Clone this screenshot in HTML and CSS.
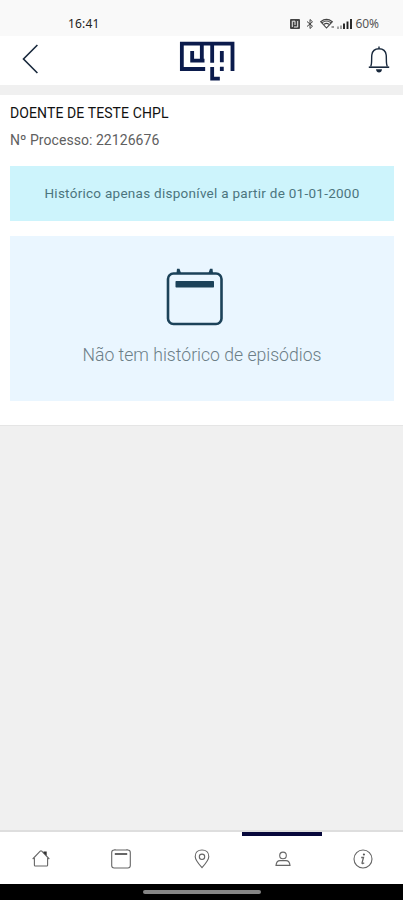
FILE: index.html
```
<!DOCTYPE html>
<html lang="pt">
<head>
<meta charset="utf-8">
<meta name="viewport" content="width=device-width, initial-scale=1">
<title>Histórico de episódios</title>
<link rel="stylesheet" href="styles.css">
</head>
<body>
<div class="screen">
  <div class="status">
    <span class="time">16:41</span>
    <div class="indicators">
      <svg class="nfc" width="10" height="10" viewBox="0 0 10 10"><rect width="10" height="10" rx="1" fill="#444"/><path d="M2.3 8V2.2H5V6M4 8H7.7V2" fill="none" stroke="#eee" stroke-width="1"/></svg>
      <svg class="bt" width="8" height="12" viewBox="0 0 8 12"><path d="M1 3.5L6.5 8.2L4 10.5V1.5L6.5 3.8L1 8.5" fill="none" stroke="#444" stroke-width="1"/></svg>
      <svg class="wifi" width="15" height="12" viewBox="0 0 15 12"><path d="M.7 3.7Q6.5-1 12.3 3.7L6.5 10ZM2.3 4.6Q6.5 1.5 10.7 4.6M4 6.3Q6.5 4.5 9 6.3" fill="none" stroke="#444" stroke-width="1.1"/><path d="M11.5 9H14" stroke="#777" stroke-width="1.5"/></svg>
      <svg class="signal" width="15" height="11" viewBox="0 0 15 11"><path d="M1 11V8.5M4 11V7.5" stroke="#888" stroke-width="1.5"/><path d="M7 11V5.5M10.5 11V3.5M14 11V1" stroke="#222" stroke-width="1.9"/></svg>
      <span class="battery">60%</span>
    </div>
  </div>
  <header class="header">
    <svg width="17" height="30" viewBox="0 0 17 30"><path d="M15.4 1L1.5 15L15.4 29" fill="none" stroke="#18283c" stroke-width="1.6"/></svg>
    <svg class="logo" width="56" height="40" viewBox="28 20 168 120"><path d="M105 104H35V28H187V110M66 50V79H95V28M95 79H103M126 28V85M126 98V133H149M155 50V84M155 97V110" fill="none" stroke="#0b1b4c" stroke-width="11.5"/></svg>
    <svg width="22" height="28" viewBox="0 0 22 28"><path d="M11 .5V2.3M2.7 20.5C4.1 18 3.4 13 3.8 9C4.3 4.8 7 2.7 11 2.7S17.7 4.8 18.2 9C18.6 13 17.9 18 19.3 20.5" fill="none" stroke="#18283c" stroke-width="1.4"/><path d="M.8 21.2H21.2" stroke="#18283c" stroke-width="1.6"/><path d="M8 23.2H14Q13.5 26.5 11 26.5T8 23.2Z" fill="#18283c"/></svg>
  </header>
  <main class="content">
    <h1 class="patient">DOENTE DE TESTE CHPL</h1>
    <p class="process">Nº Processo: 22126676</p>
    <div class="notice"><span>Histórico apenas disponível a partir de 01-01-2000</span></div>
    <section class="empty">
      <svg width="58" height="60" viewBox="0 0 58 60"><rect x="2" y="5.5" width="53.5" height="50.5" rx="5.5" fill="none" stroke="#1c4259" stroke-width="2.6"/><path d="M10.5 5L11 .8H13.5L15 5ZM42.5 5L44 .8H46.5L47 5Z" fill="#1c4259"/><rect x="9.5" y="13" width="38.5" height="6.5" rx=".7" fill="#1c4259"/></svg>
      <p class="message">Não tem histórico de episódios</p>
    </section>
  </main>
  <nav class="nav">
    <div class="tab"><svg width="20" height="20" viewBox="0 0 20 20"><path d="M1.7 10L9.2 2.2Q10 1.5 10.8 2.2L18.3 10M3.4 9V16.2Q3.4 17 4.2 17H15.8Q16.6 17 16.6 16.2V9" /><path d="M12.5 2.5H15.7V6.8L12.5 4Z" fill="#333" stroke="none"/></svg></div>
    <div class="tab"><svg width="20" height="20" viewBox="0 0 20 20"><rect x=".7" y="1" width="18.6" height="18" rx="2.5"/><path d="M4 .3V1M16 .3V1"/><path d="M3.8 5H16.2" stroke-width="2"/></svg></div>
    <div class="tab"><svg width="20" height="20" viewBox="0 0 20 20"><path d="M10 18.6Q3.2 11 3.2 7.4C3.2 3.5 6 1 10 1S16.8 3.5 16.8 7.4Q16.8 11 10 18.6Z"/><circle cx="10" cy="7.8" r="2.7"/></svg></div>
    <div class="tab active"><svg width="20" height="20" viewBox="0 0 20 20"><circle cx="10" cy="6.4" r="3.3"/><path d="M3 16.4Q3.5 11.6 7 11.6H13Q16.5 11.6 17 16.4Z"/></svg></div>
    <div class="tab"><svg width="20" height="20" viewBox="0 0 20 20"><circle cx="10" cy="10" r="9"/><path d="M8.2 8.5H10.5L9 14.2Q9.5 15 11.2 13.8" stroke-width="1.3"/><circle cx="10.9" cy="5.5" r="1.1" fill="#555" stroke="none"/></svg></div>
  </nav>
  <div class="system"><div class="handle"></div></div>
</div>
</body>
</html>
```
FILE: styles.css
```
* { box-sizing: border-box; }
body { margin: 0; font-family: Roboto, "Liberation Sans", sans-serif; }
h1, p { margin: 0; font-weight: 400; }
svg { display: block; flex: none; }
.screen { width: 403px; height: 900px; display: flex; flex-direction: column; background: #f0f0f0; overflow: hidden; }
.status { height: 36px; flex: none; background: #f9f9f9; display: flex; justify-content: space-between; align-items: flex-start; padding: 16px 24px 0 68px; color: #222; }
.time { font: 400 12px/16px "Noto Sans", sans-serif; letter-spacing: .15px; }
.indicators { display: flex; align-items: center; height: 16px; }
.bt { margin-left: 6px; }
.wifi { margin-left: 6px; }
.signal { margin-left: 2px; margin-top: -1px; }
.battery { margin-left: 4px; font: 12px/16px "Noto Sans", sans-serif; letter-spacing: -.1px; color: #555; }
.header { height: 49px; flex: none; background: #fff; display: grid; grid-template-columns: 1fr auto 1fr; padding: 0 13px 0 22px; align-items: start; }
.header > :first-child { margin-top: 8px; }
.header > :last-child { margin-top: 10px; justify-self: end; }
.logo { margin-top: 5px; margin-left: 5px; transform: translateX(-1.5px); }
.content { height: 331px; flex: none; margin-top: 10px; padding: 9px 9px 0 10px; background: #fff; border-bottom: 1px solid #e5e5e5; }
.patient { font-size: 14px; line-height: 18px; letter-spacing: .1px; color: #111; white-space: nowrap; }
.process { margin-top: 9px; font-size: 14px; line-height: 18px; letter-spacing: .05px; color: #606060; white-space: nowrap; }
.notice { height: 55px; margin-top: 17px; padding-bottom: 2px; background: #cdf4fc; display: flex; align-items: center; justify-content: center; font-size: 13.5px; letter-spacing: .27px; color: #4c757e; white-space: nowrap; }
.empty { height: 165px; margin-top: 15px; background: #eaf6ff; display: flex; flex-direction: column; align-items: center; padding: 32px 14px 0 0; }
.message { margin-top: 15px; margin-left: 14px; font-size: 17.6px; line-height: 24px; font-weight: 300; color: #6c7e87; white-space: nowrap; }
.nav { height: 54px; flex: none; margin-top: auto; display: grid; grid-template-columns: repeat(5, 1fr); background: #fff; border-top: 2px solid #dedede; padding-bottom: 2px; }
.tab { display: flex; align-items: center; justify-content: center; padding: 3px 0 0 1px; }
.tab svg { fill: none; stroke: #666; stroke-width: 1.1; }
.active { box-shadow: inset 0 4px #07083b; }
.system { height: 16px; flex: none; background: #000; display: flex; justify-content: center; padding-top: 6px; }
.handle { width: 118px; height: 4px; border-radius: 2px; background: #858585; }
```
